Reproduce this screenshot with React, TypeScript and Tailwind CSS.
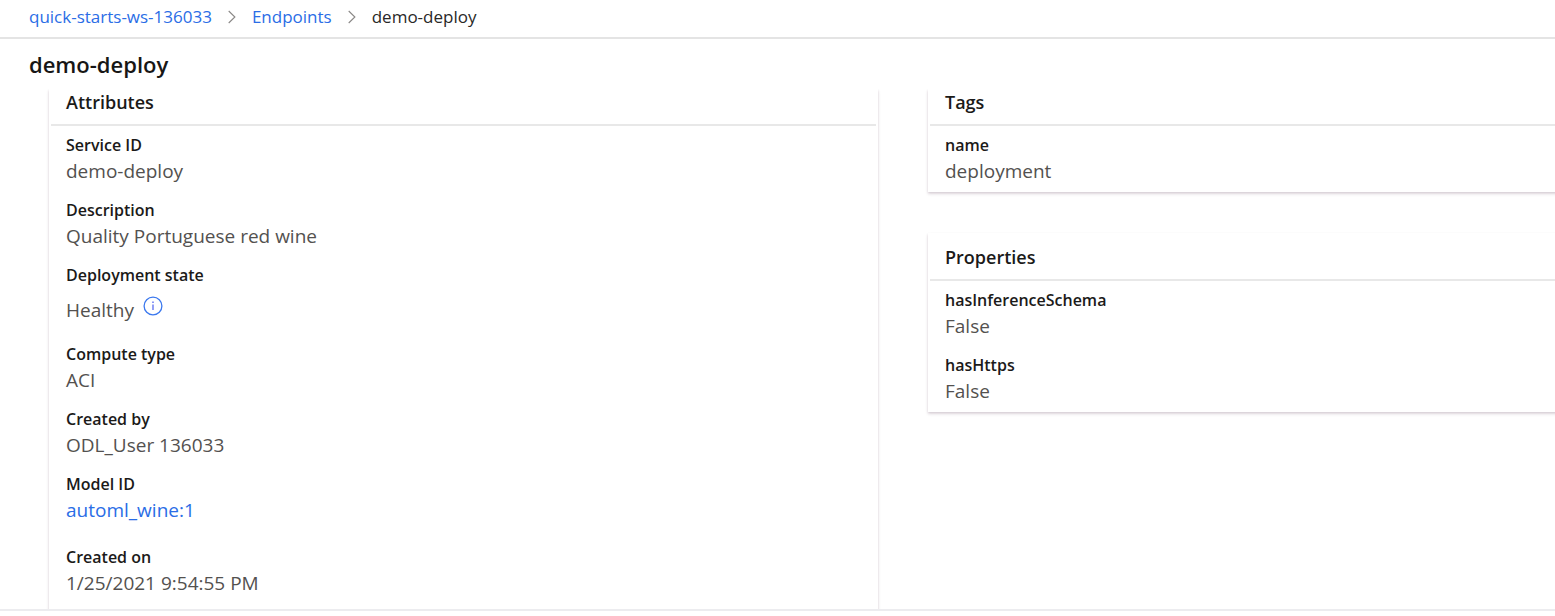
import type { ReactNode } from "react";

type FieldProps = { label: string; children: ReactNode; className?: string };

function Field({ label, children, className = "pb-[14px]" }: FieldProps) {
  return (
    <div className={className}>
      <dt className="text-[16px] leading-[25px] font-semibold text-[#1b1a19]">{label}</dt>
      <dd className="text-[19px] leading-[26px] text-[#53514f]">{children}</dd>
    </div>
  );
}

type CardProps = { title: string; children: ReactNode; clipped?: boolean };

function Card({ title, children, clipped = false }: CardProps) {
  return (
    <section className="bg-white px-[2px] shadow-[0_2px_3px_rgba(70,30,60,0.15),0_1px_2px_rgba(70,30,60,0.1)]">
      <h2
        className={`border-b-2 border-[#e8e8e8] px-[15px] pb-[9px] text-[18px] leading-[26px] font-semibold text-[#1b1a19] ${
          clipped ? "" : "pt-[11px]"
        }`}
      >
        {title}
      </h2>
      <dl className="px-[15px] pt-[7px]">{children}</dl>
    </section>
  );
}

function Chevron() {
  return (
    <svg aria-hidden="true" width="8" height="14" viewBox="0 0 8 14" fill="none" stroke="#8a8886" strokeWidth="1.1">
      <path d="M0.7 1 L6.9 7 L0.7 13" />
    </svg>
  );
}

function InfoIcon() {
  return (
    <svg aria-hidden="true" width="20" height="20" viewBox="0 0 20 20" fill="none">
      <circle cx="10" cy="10" r="8.9" stroke="#3b78ee" strokeWidth="1.3" />
      <path d="M10 8.6 V14" stroke="#5a6cf0" strokeWidth="1.3" />
      <path d="M10 5.6 V7.1" stroke="#5a6cf0" strokeWidth="1.4" />
    </svg>
  );
}

export default function App() {
  return (
    <div className="flex h-screen flex-col overflow-hidden bg-white font-['Open_Sans','Noto_Sans',sans-serif]">
      <nav aria-label="Breadcrumb" className="shrink-0 border-b-2 border-[#e4e4e4] px-[29px] pb-[3px]">
        <ol className="flex items-center gap-4 text-[17px] leading-[34px]">
          <li>
            <a href="#workspace" className="text-[#2a6de6]">quick-starts-ws-136033</a>
          </li>
          <li><Chevron /></li>
          <li>
            <a href="#endpoints" className="text-[#2a6de6]">Endpoints</a>
          </li>
          <li><Chevron /></li>
          <li aria-current="page" className="text-[#292827]">demo-deploy</li>
        </ol>
      </nav>
      <h1 className="shrink-0 px-[29px] pt-[9px] pb-[9px] text-[22px] leading-[32px] font-semibold text-[#171615]">
        demo-deploy
      </h1>
      <main className="grid min-h-0 flex-1 grid-cols-[829fr_627fr] gap-[50px] overflow-hidden pl-[49px]">
        <Card title="Attributes" clipped>
          <Field label="Service ID">demo-deploy</Field>
          <Field label="Description">Quality Portuguese red wine</Field>
          <Field label="Deployment state">
            <span className="flex h-[40px] items-center gap-[9px] pt-[4px]">
              Healthy
              <button type="button" aria-label="Deployment state details" className="mb-[8px]">
                <InfoIcon />
              </button>
            </span>
          </Field>
          <Field label="Compute type">ACI</Field>
          <Field label="Created by">ODL_User 136033</Field>
          <Field label="Model ID" className="pb-[22px]">
            <a href="#model" className="text-[#2a6de6]">automl_wine:1</a>
          </Field>
          <Field label="Created on">1/25/2021 9:54:55 PM</Field>
        </Card>
        <div className="-mr-2 flex flex-col gap-[41px]">
          <Card title="Tags" clipped>
            <Field label="name" className="pb-[8px]">deployment</Field>
          </Card>
          <Card title="Properties">
            <Field label="hasInferenceSchema">False</Field>
            <Field label="hasHttps" className="pb-[8px]">False</Field>
          </Card>
        </div>
      </main>
      <footer className="h-[7px] shrink-0 border-t-2 border-[#ececef] bg-white" />
    </div>
  );
}
